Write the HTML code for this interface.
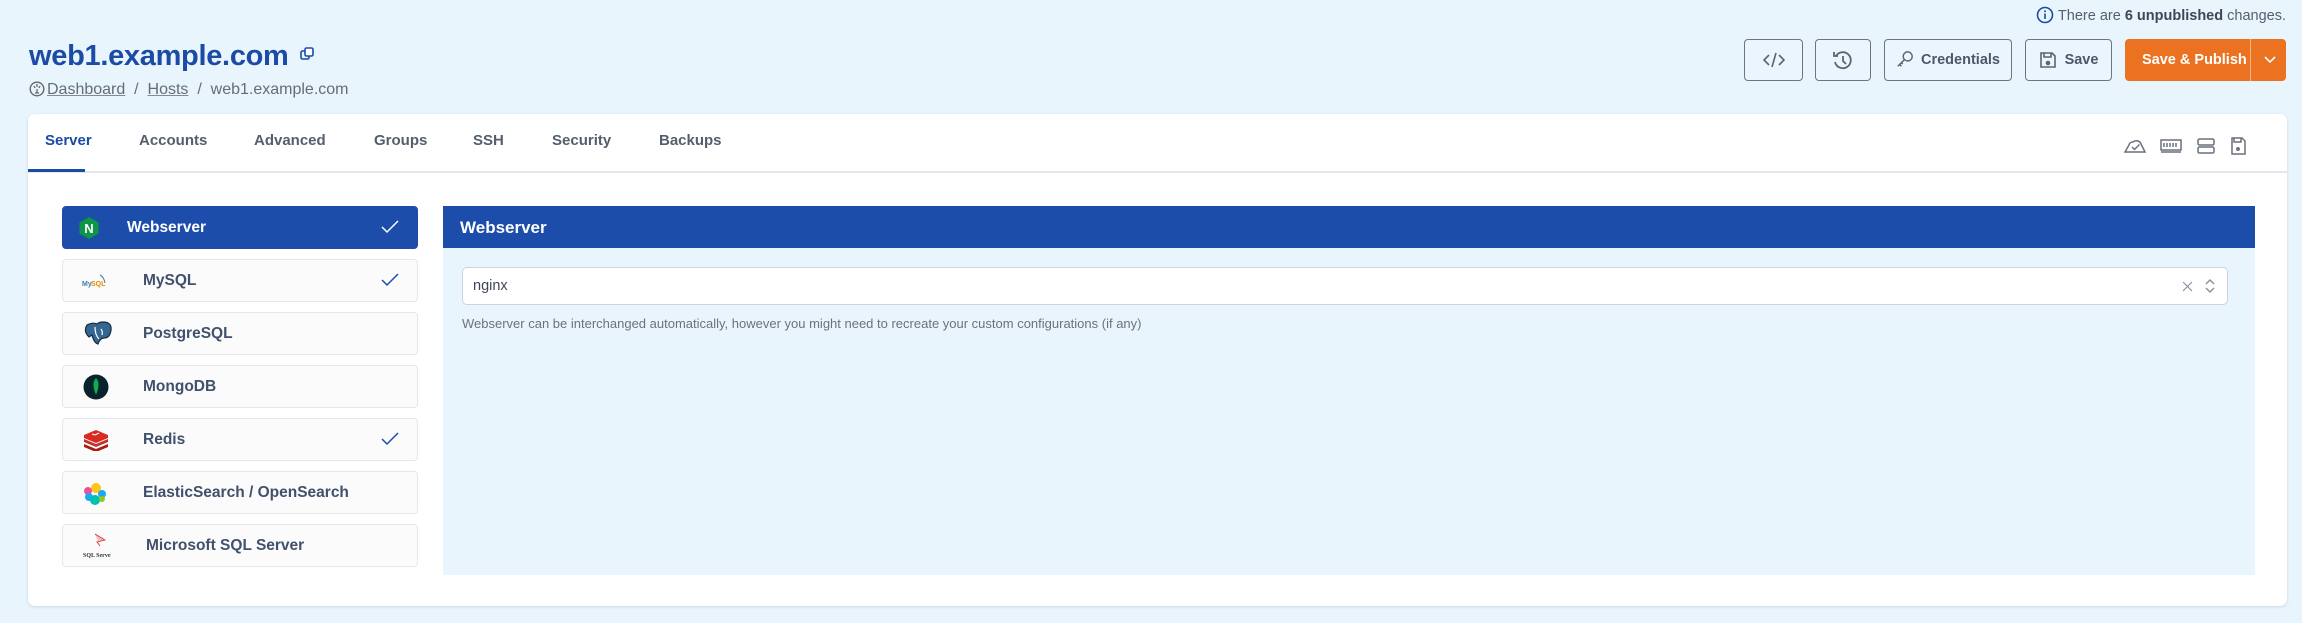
<!DOCTYPE html>
<html><head><meta charset="utf-8"><style>
*{box-sizing:border-box;margin:0;padding:0}
body{width:2302px;height:623px;background:#e9f5fd;font-family:"Liberation Sans",sans-serif;position:relative;overflow:hidden;color:#4a5468}
.abs{position:absolute}
.title{left:29px;top:40px;font-size:29px;font-weight:bold;color:#1c4ba6;letter-spacing:-0.3px}
.bc{left:29px;top:81px;font-size:16px;color:#666c76}
.bc u{text-decoration:underline;text-decoration-color:#888}
.notice{right:16px;top:6px;font-size:14.5px;color:#555e70}
.btn{position:absolute;top:39px;height:42px;border:1.5px solid #6b7585;border-radius:4px;display:flex;align-items:center;justify-content:center;font-size:14.5px;font-weight:bold;color:#4d5769;background:#eaf5fd}
.card{left:28px;top:114px;width:2259px;height:492px;background:#fff;border-radius:7px;box-shadow:0 1px 3px rgba(0,0,0,.12)}
.tab{position:absolute;top:132px;font-size:15px;font-weight:bold;color:#555e6c}
.item{position:absolute;left:62px;width:356px;height:43px;border:1.5px solid #e4e7eb;border-radius:4px;background:#fbfbfc;font-size:15.5px;font-weight:bold;color:#41506b}
.item span{position:absolute;top:12px}
.ck{position:absolute;right:18px;top:12px}
</style></head><body>
<div class="abs notice"><svg width="18" height="18" viewBox="0 0 18 18" style="vertical-align:-4px;margin-right:4px"><circle cx="9" cy="9" r="7.5" fill="none" stroke="#1c4ba6" stroke-width="1.6"/><rect x="8.2" y="7.5" width="1.6" height="5.5" fill="#1c4ba6"/><circle cx="9" cy="5.2" r="1" fill="#1c4ba6"/></svg>There are <b style="color:#3e4658">6 unpublished</b> changes.</div>
<div class="abs title">web1.example.com <svg width="14" height="14" viewBox="0 0 14 14" style="vertical-align:4px;margin-left:4px"><rect x="1" y="4" width="8" height="8" rx="1.5" fill="none" stroke="#1c4ba6" stroke-width="1.6"/><rect x="5" y="1" width="8" height="8" rx="1.5" fill="#fff" stroke="#1c4ba6" stroke-width="1.6"/></svg></div>
<div class="abs bc"><svg width="16" height="16" viewBox="0 0 16 16" style="vertical-align:-3px;margin-right:2px"><circle cx="8" cy="8" r="6.8" fill="none" stroke="#666" stroke-width="1.4"/><path d="M8 3v3M5 5l1 2M11 5l-1 2M8 8v4M6 12h4" stroke="#666" stroke-width="1.3" fill="none"/></svg><u>Dashboard</u> &nbsp;/&nbsp; <u>Hosts</u> &nbsp;/&nbsp; web1.example.com</div>

<div class="btn" style="left:1744px;width:59px"><svg width="24" height="20" viewBox="0 0 24 20" fill="none" stroke="#5a6475" stroke-width="1.6"><path d="M7 5l-5 5 5 5M17 5l5 5-5 5M14 3l-4 14"/></svg></div>
<div class="btn" style="left:1815px;width:56px"><svg width="24" height="24" viewBox="0 0 24 24" fill="none" stroke="#5a6475" stroke-width="1.8"><path d="M5 8a8 8 0 1 1-1 6"/><path d="M3 4v4h4"/><path d="M12 8v5l3 3"/></svg></div>
<div class="btn" style="left:1884px;width:128px"><svg width="18" height="20" viewBox="0 0 20 22" fill="none" stroke="#5a6475" stroke-width="1.6" style="margin-right:7px"><circle cx="13" cy="7" r="5"/><path d="M9.5 10.5L2 18M4 16l2 2M6 14l1.5 1.5"/></svg>Credentials</div>
<div class="btn" style="left:2025px;width:87px"><svg width="18" height="18" viewBox="0 0 18 18" fill="none" stroke="#5a6475" stroke-width="1.6" style="margin-right:8px"><path d="M2 2h11l3 3v11H2z"/><path d="M5 2v4h7V2"/><circle cx="9" cy="12" r="1.5" fill="#5a6475"/></svg>Save</div>
<div class="btn" style="left:2125px;width:161px;background:#ea7220;border-color:#ea7220;color:#fff;justify-content:flex-start"><span style="padding-left:16px">Save &amp; Publish</span><div style="position:absolute;left:124px;top:-1px;bottom:-1px;border-left:1px solid #f5b589"></div><svg width="14" height="10" viewBox="0 0 14 10" style="position:absolute;left:137px;top:15px" fill="none" stroke="#fff" stroke-width="1.6"><path d="M2 2l5 5 5-5"/></svg></div>

<div class="abs card"></div>
<div class="tab" style="left:45px;color:#1c4ba6">Server</div>
<div class="tab" style="left:139px">Accounts</div>
<div class="tab" style="left:254px">Advanced</div>
<div class="tab" style="left:374px">Groups</div>
<div class="tab" style="left:473px">SSH</div>
<div class="tab" style="left:552px">Security</div>
<div class="tab" style="left:659px">Backups</div>
<div class="abs" style="left:28px;top:171px;width:2259px;height:1.5px;background:#e4e6ea"></div>
<div class="abs" style="left:28px;top:169px;width:57px;height:3px;background:#1c4ba6"></div>
<svg class="abs" style="left:2123px;top:135px" width="130" height="22" viewBox="0 0 130 22" fill="none" stroke="#6a717c" stroke-width="1.5">
<path d="M2 17h20l-4-8a5 5 0 0 0-8-2 4 4 0 0 0-4 3z"/><path d="M9 12l2.5 2.5 5-5"/>
<rect x="38" y="5" width="20" height="10"/><path d="M41 8v4M44 8v4M47 8v4M50 8v4M53 8v4M38 17h20"/>
<rect x="75" y="4" width="16" height="6" rx="1.5"/><rect x="75" y="12" width="16" height="6" rx="1.5"/>
<path d="M109 3h10l3 3v13h-13z"/><circle cx="115" cy="14" r="1.2" fill="#6a717c"/><path d="M111 3v4h7V3"/>
</svg>

<div class="item" style="top:206px;background:#1c4dab;border-color:#1c4dab;color:#fff"><svg class="abs" style="left:15px;top:9px" width="22" height="24" viewBox="0 0 22 24"><path d="M11 1l9.5 5.5v11L11 23 1.5 17.5v-11z" fill="#0e9647"/><text x="11" y="17" text-anchor="middle" font-size="13" font-weight="bold" fill="#fff" font-family="Liberation Sans">N</text></svg><span style="left:64px">Webserver</span><svg class="ck" width="18" height="16" viewBox="0 0 18 16" fill="none" stroke="#fff" stroke-width="1.5"><path d="M1 8l5 5L17 2"/></svg></div>
<div class="item" style="top:259px"><svg class="abs" style="left:19px;top:13px" width="26" height="16" viewBox="0 0 26 16"><text x="0" y="13" font-size="7" fill="#3b7db3" font-family="Liberation Sans" font-weight="bold">My</text><text x="9" y="13" font-size="7" fill="#e48e00" font-family="Liberation Sans" font-weight="bold">SQL</text><path d="M18 2q4 2 5 8" stroke="#3b7db3" fill="none"/></svg><span style="left:80px">MySQL</span><svg class="ck" width="18" height="16" viewBox="0 0 18 16" fill="none" stroke="#1c4ba6" stroke-width="1.5"><path d="M1 8l5 5L17 2"/></svg></div>
<div class="item" style="top:312px"><svg class="abs" style="left:20px;top:8px" width="30" height="26" viewBox="0 0 30 26"><path d="M4 4q-4 6 2 12l3-2q2 8 6 9 2-6 6-6 6 0 7-8t-8-8q-4 0-6 2-4-2-10 1z" fill="#336791" stroke="#1b2a3a" stroke-width="1.2"/><path d="M12 6q0 8 4 12M18 8q2 3 1 6" stroke="#fff" fill="none" stroke-width="1.2"/></svg><span style="left:80px">PostgreSQL</span></div>
<div class="item" style="top:365px"><svg class="abs" style="left:20px;top:7px" width="26" height="28" viewBox="0 0 26 28"><circle cx="13" cy="14" r="12.5" fill="#07232c"/><path d="M13 5q5 5 0 17q-5-12 0-17z" fill="#13aa52"/></svg><span style="left:80px">MongoDB</span></div>
<div class="item" style="top:418px"><svg class="abs" style="left:20px;top:10px" width="26" height="22" viewBox="0 0 26 22"><path d="M1 15l12 5 12-5v3l-12 5-12-5z" fill="#a41e11"/><path d="M1 10l12 5 12-5v3l-12 5-12-5z" fill="#c6302b"/><path d="M1 6l12-5 12 5v3l-12 5-12-5z" fill="#d82c20"/><path d="M9 5l3 1 4-2" stroke="#fff" fill="none"/></svg><span style="left:80px">Redis</span><svg class="ck" width="18" height="16" viewBox="0 0 18 16" fill="none" stroke="#1c4ba6" stroke-width="1.5"><path d="M1 8l5 5L17 2"/></svg></div>
<div class="item" style="top:471px"><svg class="abs" style="left:20px;top:10px" width="24" height="24" viewBox="0 0 24 24"><circle cx="13" cy="6" r="5" fill="#fec514"/><circle cx="5" cy="9" r="4" fill="#f04e98"/><circle cx="19" cy="12" r="4" fill="#1ba9f5"/><circle cx="6" cy="15" r="4" fill="#1ba9f5"/><circle cx="12" cy="18" r="5" fill="#00bfb3"/><circle cx="19" cy="17" r="3" fill="#93c90e"/></svg><span style="left:80px">ElasticSearch / OpenSearch</span></div>
<div class="item" style="top:524px"><svg class="abs" style="left:20px;top:7px" width="28" height="28" viewBox="0 0 28 28"><path d="M12 2l10 6-8 2 3 4" stroke="#c33" fill="#f6bcbc" stroke-width="0.8"/><text x="0" y="25" font-size="6" fill="#333" font-family="Liberation Serif">SQL Server</text></svg><span style="left:83px">Microsoft SQL Server</span></div>

<div class="abs" style="left:443px;top:206px;width:1812px;height:369px;background:#e9f5fd"></div>
<div class="abs" style="left:443px;top:206px;width:1812px;height:42px;background:#1c4dab;color:#fff;font-weight:bold;font-size:17px;padding:12px 0 0 17px">Webserver</div>
<div class="abs" style="left:462px;top:267px;width:1766px;height:38px;background:#fff;border:1.5px solid #ccd3dc;border-radius:5px;font-size:14.5px;color:#3e4658;padding:10px 0 0 10px">nginx
<svg class="abs" style="right:34px;top:13px" width="11" height="11" viewBox="0 0 11 11" stroke="#8a93a4" stroke-width="1.2"><path d="M1 1l9 9M10 1l-9 9"/></svg>
<svg class="abs" style="right:12px;top:10px" width="10" height="16" viewBox="0 0 10 16" fill="none" stroke="#8a93a4" stroke-width="1.5"><path d="M1 6l4-4 4 4M1 10l4 4 4-4"/></svg></div>
<div class="abs" style="left:462px;top:316px;font-size:13px;color:#6a7280">Webserver can be interchanged automatically, however you might need to recreate your custom configurations (if any)</div>
</body></html>
